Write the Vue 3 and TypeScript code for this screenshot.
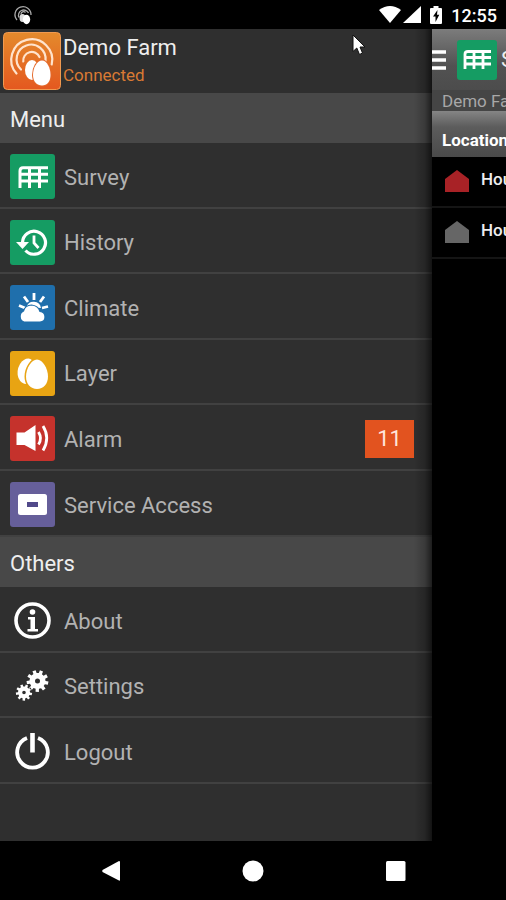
<script setup lang="ts">
interface MenuItem {
  id: string
  label: string
  tile?: string
  badge?: number
}

interface Section {
  title: string
  items: MenuItem[]
}

const sections: Section[] = [
  {
    title: 'Menu',
    items: [
      { id: 'survey', label: 'Survey', tile: 'green' },
      { id: 'history', label: 'History', tile: 'green' },
      { id: 'climate', label: 'Climate', tile: 'blue' },
      { id: 'layer', label: 'Layer', tile: 'amber' },
      { id: 'alarm', label: 'Alarm', tile: 'red', badge: 11 },
      { id: 'service', label: 'Service Access', tile: 'violet' },
    ],
  },
  {
    title: 'Others',
    items: [
      { id: 'about', label: 'About' },
      { id: 'settings', label: 'Settings' },
      { id: 'logout', label: 'Logout' },
    ],
  },
]

const houses = [
  { name: 'House 1', state: 'alarm' },
  { name: 'House 2', state: 'idle' },
]

/** Outline of a toothed wheel with a round hole, for an evenodd fill. */
function gear(cx: number, cy: number, outer: number, inner: number, hole: number, teeth: number): string {
  const points: string[] = []
  const step = (Math.PI * 2) / teeth
  for (let i = 0; i < teeth; i++) {
    const corners: [number, number][] = [[-0.3, inner], [-0.22, outer], [0.22, outer], [0.3, inner]]
    for (const [offset, radius] of corners) {
      const angle = (i + offset) * step + 0.2
      points.push(`${(cx + radius * Math.cos(angle)).toFixed(2)} ${(cy + radius * Math.sin(angle)).toFixed(2)}`)
    }
  }
  return `M${points.join('L')}ZM${cx - hole} ${cy}a${hole} ${hole} 0 1 0 ${hole * 2} 0a${hole} ${hole} 0 1 0 ${-hole * 2} 0Z`
}

const gears = gear(27.5, 17, 11, 8, 2.5, 9) + gear(14, 28.5, 8.2, 6, 1.8, 9)
</script>

<template>
  <div class="screen">
    <header class="status">
      <svg class="status-app" viewBox="0 0 20 20" aria-hidden="true">
        <g fill="none" stroke="#aaa" stroke-width="1.3">
          <path d="M4 15A8 8 0 1 1 18 10" />
          <path d="M6 12.500A5.200 5.200 0 1 1 15.500 8" />
          <path d="M8 9.500A2.600 2.600 0 0 1 12.500 7.500" />
        </g>
        <ellipse cx="9.500" cy="13" rx="3" ry="4" fill="#ddd" />
        <ellipse cx="13.500" cy="14.500" rx="3.700" ry="4.700" fill="#fff" />
      </svg>
      <div class="status-right">
        <svg class="wifi" viewBox="0 0 22 17" aria-hidden="true"><path d="M0 4Q11-4 22 4L11 17Z" fill="#fff" /></svg>
        <svg class="signal" viewBox="0 0 18 17" aria-hidden="true"><path d="M18 0V17H0Z" fill="#fff" /></svg>
        <svg class="battery" viewBox="0 0 12 18" aria-hidden="true">
          <path d="M3.500 0h5v2H11q1 0 1 1v14q0 1-1 1H1q-1 0-1-1V3q0-1 1-1h2.500Z" fill="#fff" />
          <path d="M7.500 4L3 10.500h2.500V16L9.300 8.800H7Z" fill="#000" />
        </svg>
        <time class="clock">12:55</time>
      </div>
    </header>

    <div class="body">
      <aside class="drawer">
        <div class="account">
          <svg class="logo" viewBox="0 0 58 58" aria-hidden="true">
            <defs>
              <linearGradient id="logo-fill" x1="0" y1="0" x2="0" y2="1">
                <stop offset="0" stop-color="#e48a2c" />
                <stop offset="1" stop-color="#e4581f" />
              </linearGradient>
            </defs>
            <rect x="0.500" y="0.500" width="57" height="57" rx="4" fill="url(#logo-fill)" stroke="#f09a50" />
            <g fill="none" stroke="#ffe3cc" stroke-width="2.200" stroke-linecap="round">
              <path d="M13.500 41.500A20.500 20.500 0 1 1 48.700 32.500" />
              <path d="M18 37.500A14.500 14.500 0 1 1 42.500 29" />
              <path d="M20.300 29.500A8.500 8.500 0 0 1 36.500 25" />
            </g>
            <ellipse cx="29" cy="38" rx="7" ry="10" fill="#fff" />
            <path d="M39 28.500C44 28.500 47.500 36 47.500 43C47.500 49.500 44 53.500 39 53.500S30 49.500 30 43C30 36 34 28.500 39 28.500Z" fill="#fff" stroke="#e4682a" stroke-width="2" paint-order="stroke" />
          </svg>
          <div class="account-text">
            <strong class="farm">Demo Farm</strong>
            <span class="connection">Connected</span>
          </div>
        </div>

        <nav v-for="section in sections" :key="section.title" :aria-label="section.title">
          <h2 class="heading">{{ section.title }}</h2>
          <ul class="list">
            <li v-for="item in section.items" :key="item.id" class="row">
              <a class="link" :href="'#' + item.id">
                <span class="tile" :class="item.tile">
                  <svg viewBox="0 0 45 45" aria-hidden="true">
                    <g v-if="item.id === 'survey'" fill="none" stroke="#fff" stroke-width="3">
                      <path d="M38 13.700H13Q10 13.700 10 17V34M10 20.300H38M10 27H38M19.500 14V34M29.500 14V34" />
                    </g>
                    <g v-else-if="item.id === 'history'">
                      <path d="M12.500 22.500A11.500 11.500 0 1 1 15.500 30.500" fill="none" stroke="#fff" stroke-width="3.200" />
                      <path d="M6 22H19L12.500 29Z" fill="#fff" />
                      <path d="M24 15.500V23L28.500 28" fill="none" stroke="#fff" stroke-width="2.800" />
                    </g>
                    <g v-else-if="item.id === 'climate'">
                      <path d="M24 8V15M14 11.500L18 17M34 11.500L30 17M9 20.500L15 23M38 21.500L32 23" fill="none" stroke="#fff" stroke-width="2.800" />
                      <path d="M16.500 22A7.500 7.500 0 0 1 31 23Z" fill="#fff" />
                      <path d="M14 37A6 6 0 0 1 13.500 26Q15 20.500 21.500 20Q28 20.500 30 26.500Q35 27 35 32Q35 37 30 37Z" fill="#fff" stroke="#1f6fac" stroke-width="1.200" />
                    </g>
                    <g v-else-if="item.id === 'layer'" fill="#fff">
                      <path d="M18.500 7.500C21 7.500 24 11 26 15V33H17Q11 33 8.500 27Q6 20 10 13Q13.500 7.500 18.500 7.500Z" />
                      <path d="M27 8.500C32.500 8.500 38 17.500 38 25.500C38 33 33.500 38 27 38S16 33 16 25.500C16 17.500 21.500 8.500 27 8.500Z" stroke="#e8a413" stroke-width="3" paint-order="stroke" />
                    </g>
                    <g v-else-if="item.id === 'alarm'">
                      <path d="M6.500 16.500H14.500L25.500 9V35L14.500 29H6.500Z" fill="#fff" />
                      <path d="M28.500 16Q32.500 22.500 28.500 28.500M33 10Q40.500 22 33 34.500" fill="none" stroke="#fff" stroke-width="2.800" />
                    </g>
                    <g v-else-if="item.id === 'service'">
                      <rect x="8" y="12" width="29" height="21" rx="2.500" fill="#fff" />
                      <rect x="17" y="20" width="11" height="5" fill="#51498a" />
                    </g>
                    <g v-else-if="item.id === 'about'">
                      <circle cx="22.500" cy="22.500" r="16.500" fill="none" stroke="#fff" stroke-width="3.600" />
                      <circle cx="22.500" cy="14" r="2.800" fill="#fff" />
                      <path d="M18 19H25V31H28V33.500H17.500V31H20.500V21.500H18Z" fill="#fff" />
                    </g>
                    <path v-else-if="item.id === 'settings'" :d="gears" fill="#fff" fill-rule="evenodd" />
                    <g v-else fill="none" stroke="#fff" stroke-width="3.800">
                      <path d="M17 9A15.300 15.300 0 1 0 28 9" />
                      <path d="M22.500 4V23.500" stroke-width="4.600" />
                    </g>
                  </svg>
                </span>
                <span class="label">{{ item.label }}</span>
                <span v-if="item.badge" class="badge">{{ item.badge }}</span>
              </a>
            </li>
          </ul>
        </nav>
      </aside>

      <main class="page">
        <div class="toolbar">
          <button class="burger" type="button" aria-label="Close menu">
            <svg viewBox="0 0 14 20" aria-hidden="true"><path d="M0 2H14M0 10H14M0 18H14" stroke="#fff" stroke-width="3.400" /></svg>
          </button>
          <svg class="page-icon" viewBox="0 0 40 40" aria-hidden="true">
            <rect width="40" height="40" rx="3" fill="#159c63" />
            <path d="M34 11.500H11Q8 11.500 8 14V29M8 17.500H34M8 24H34M17 11.500V29M26 11.500V29" fill="none" stroke="#fff" stroke-width="2.800" />
          </svg>
          <h1 class="page-title">Survey</h1>
        </div>
        <p class="page-farm">Demo Farm</p>
        <h2 class="page-heading">Location</h2>
        <ul class="list">
          <li v-for="house in houses" :key="house.name" class="house">
            <svg class="house-icon" :class="house.state" viewBox="0 0 26 22" aria-hidden="true">
              <path d="M13 0L25 9V22H1V9Z" />
            </svg>
            <span>{{ house.name }}</span>
          </li>
        </ul>
      </main>
    </div>

    <footer class="system">
      <button type="button" aria-label="Back"><svg viewBox="0 0 22 22"><path d="M20 2V20Q20 21 19 20.500L2.500 12Q2 11 2.500 10L19 1Q20 1 20 2Z" fill="#fff" /></svg></button>
      <button type="button" aria-label="Home"><svg viewBox="0 0 22 22"><circle cx="11" cy="11" r="10.500" fill="#fff" /></svg></button>
      <button type="button" aria-label="Overview"><svg viewBox="0 0 22 22"><rect x="2" y="1" width="19.500" height="20" rx="1.500" fill="#fff" /></svg></button>
    </footer>

    <svg class="pointer" viewBox="0 0 14 22" aria-hidden="true">
      <path d="M1 1V17.500L4.800 14L7.500 20.500L10.500 19L8 13H13Z" fill="#fff" stroke="#111" />
    </svg>
  </div>
</template>

<style>
body {
  margin: 0;
  background: #000;
}
</style>

<style scoped>
.screen {
  position: relative;
  display: flex;
  flex-direction: column;
  min-height: 100vh;
  background: #000;
  color: #eee;
  font-family: Roboto, "Liberation Sans", sans-serif;
}

svg {
  display: block;
}

h1,
h2,
p,
ul {
  margin: 0;
  padding: 0;
}

button {
  padding: 0;
  border: 0;
  background: none;
}

.status {
  display: flex;
  align-items: center;
  justify-content: space-between;
  height: 29px;
  padding: 0 9px 0 13px;
}

.status-app {
  width: 20px;
  height: 20px;
}

.status-right {
  display: flex;
  align-items: center;
}

.wifi {
  width: 22px;
  height: 17px;
  margin-right: 2px;
}

.signal {
  width: 18px;
  height: 17px;
  margin-right: 9px;
}

.battery {
  width: 12px;
  height: 18px;
  margin-right: 9px;
}

.clock {
  padding-top: 2px;
  font-size: 18px;
  font-weight: 500;
  line-height: 27px;
  color: #fff;
}

.body {
  display: flex;
  flex: 1;
}

.drawer {
  position: relative;
  flex: 1;
  min-width: 0;
  background: #2f2f2f;
}

.drawer::after {
  content: "";
  position: absolute;
  top: 0;
  right: 0;
  bottom: 0;
  width: 18px;
  background: linear-gradient(to right, transparent, rgba(0, 0, 0, 0.2) 60%, rgba(0, 0, 0, 0.6));
  pointer-events: none;
}

.account {
  display: flex;
  gap: 2px;
  height: 61px;
  padding: 3px 3px 0;
}

.logo {
  width: 58px;
  height: 58px;
}

.account-text {
  display: flex;
  flex-direction: column;
}

.farm {
  font-size: 22px;
  font-weight: 400;
  line-height: 32px;
}

.connection {
  font-size: 17px;
  line-height: 23px;
  color: #d97a34;
}

.heading {
  height: 50px;
  padding-left: 10px;
  background: #484848;
  font-size: 22px;
  font-weight: 400;
  line-height: 54px;
}

.list {
  list-style: none;
}

.row {
  box-sizing: border-box;
  height: 65px;
  border-bottom: 2px solid #414141;
}

.row:nth-child(odd),
.row:last-child {
  height: 66px;
}

.link {
  display: flex;
  align-items: center;
  gap: 9px;
  height: 100%;
  padding: 3px 18px 0 10px;
  box-sizing: border-box;
  color: #b2b2b2;
  font-size: 22px;
  text-decoration: none;
}

.tile {
  width: 45px;
  height: 45px;
  border-radius: 3px;
}

.green {
  background: #159c63;
}

.blue {
  background: #1f6fac;
}

.amber {
  background: #e8a413;
}

.red {
  background: #c5322c;
}

.violet {
  background: #665f9a;
}

.label {
  flex: 1;
  padding-top: 2px;
  line-height: 30px;
}

.badge {
  width: 49px;
  background: #e2531f;
  color: #ffe6dc;
  line-height: 38px;
  text-align: center;
}

.page {
  width: 74px;
  overflow: hidden;
  white-space: nowrap;
}

.toolbar {
  display: flex;
  align-items: center;
  height: 61px;
  background: linear-gradient(#7c7c7c, #525252 60%, #4c4c4c);
}

.burger {
  flex: none;
  margin-right: 11px;
}

.burger svg {
  width: 14px;
  height: 20px;
}

.page-icon {
  flex: none;
  width: 40px;
  height: 40px;
  margin-right: 4px;
}

.page-title {
  font-size: 22px;
  font-weight: 400;
}

.page-farm {
  height: 21px;
  padding-left: 10px;
  background: #454545;
  color: #a8a8a8;
  font-size: 17px;
  line-height: 22px;
}

.page-heading {
  height: 46px;
  padding-left: 10px;
  background: linear-gradient(#858585, #5c5c5c 35%, #4a4a4a);
  color: #fff;
  font-size: 17px;
  font-weight: 700;
  line-height: 58px;
}

.house {
  display: flex;
  gap: 11px;
  height: 49px;
  padding-left: 12px;
  border-bottom: 2px solid #151515;
  font-size: 17px;
  font-weight: 500;
  line-height: 44px;
}

.house-icon {
  flex: none;
  width: 26px;
  height: 22px;
  margin-top: 13px;
}

.alarm {
  fill: #a82226;
}

.idle {
  fill: #666;
}

.system {
  display: flex;
  align-items: center;
  justify-content: space-around;
  height: 59px;
  padding: 0 40px;
}

.system svg {
  width: 22px;
  height: 22px;
}

.pointer {
  position: absolute;
  top: 34px;
  left: 352px;
  width: 14px;
  height: 22px;
}
</style>
